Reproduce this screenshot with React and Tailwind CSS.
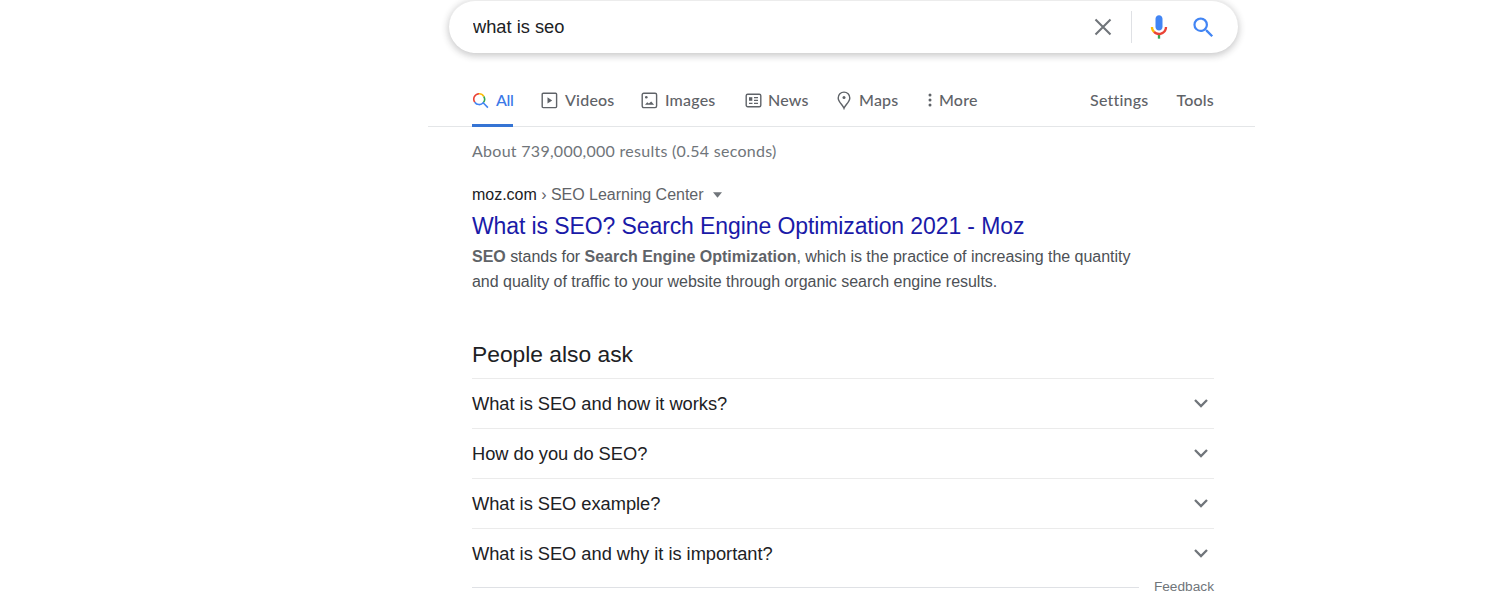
import React, { useState } from "react";

const questions = [
  "What is SEO and how it works?",
  "How do you do SEO?",
  "What is SEO example?",
  "What is SEO and why it is important?",
];

function MicIcon() {
  return (
    <svg width="28" height="28" viewBox="0 0 24 24">
      <path fill="#4285f4" d="M12 15c1.66 0 3-1.31 3-2.97v-7.02c0-1.66-1.34-3.01-3-3.01s-3 1.34-3 3.01v7.02c0 1.66 1.34 2.97 3 2.97z" />
      <path fill="#34a853" d="M11 18.08h2v3.92h-2z" />
      <path fill="#fbbc05" d="M7.05 16.87c-1.27-1.33-2.05-2.83-2.05-4.87h2c0 1.45.56 2.42 1.47 3.38v.32l-1.15 1.18z" />
      <path fill="#ea4335" d="M12 16.93a4.97 5.25 0 0 1-3.54-1.55l-1.41 1.49c1.26 1.34 3.02 2.13 4.95 2.13 3.87 0 6.99-2.92 6.99-7h-1.99c0 2.92-2.24 4.93-5 4.93z" />
    </svg>
  );
}

function SearchIcon() {
  return (
    <svg width="27" height="27" viewBox="0 0 24 24" fill="#4285f4">
      <path d="M15.5 14h-.79l-.28-.27A6.471 6.471 0 0 0 16 9.5 6.5 6.5 0 1 0 9.5 16c1.61 0 3.09-.59 4.23-1.57l.27.28v.79l5 4.99L20.49 19l-4.99-5zm-6 0C7.01 14 5 11.99 5 9.5S7.01 5 9.5 5 14 7.01 14 9.5 11.99 14 9.5 14z" />
    </svg>
  );
}

function AllIcon() {
  return (
    <svg className="shrink-0" width="17" height="17" viewBox="0 0 17 17" fill="none" strokeWidth="1.6">
      <path stroke="#ea4335" d="M2.8 10.2A5.3 5.3 0 0 1 7 1.8" />
      <path stroke="#fbbc05" d="M7 1.8A5.3 5.3 0 0 1 11.8 4.5" />
      <path stroke="#34a853" d="M11.8 4.5A5.3 5.3 0 0 1 11.2 10.8" />
      <path stroke="#4285f4" d="M2.8 10.2A5.3 5.3 0 0 0 11.2 10.8L15.9 15.6" />
    </svg>
  );
}

function VideosIcon() {
  return (
    <svg width="17" height="17" viewBox="0 0 17 17" fill="none" stroke="#5f6368" strokeWidth="1.4">
      <rect x="1.2" y="1.2" width="14.4" height="14.4" rx="1" />
      <path d="M6.5 5.2v6.4l4.7-3.2z" fill="#5f6368" stroke="none" />
    </svg>
  );
}

function ImagesIcon() {
  return (
    <svg width="17" height="17" viewBox="0 0 17 17" fill="none" stroke="#5f6368" strokeWidth="1.4">
      <rect x="1.2" y="1.2" width="14.4" height="14.4" rx="1.5" />
      <circle cx="5.3" cy="5.2" r="1.3" fill="#5f6368" stroke="none" />
      <path d="M4 12.8l2.2-2.5 1.7 1.2 2.3-2.1 2.9 3.4z" fill="#5f6368" stroke="none" />
    </svg>
  );
}

function NewsIcon() {
  return (
    <svg width="17" height="17" viewBox="0 0 17 17" fill="none" stroke="#5f6368" strokeWidth="1.4">
      <rect x="1.2" y="2.2" width="14.6" height="12.6" rx="1.5" />
      <path d="M4 5.2h3.3v3.6H4z" fill="#5f6368" stroke="none" />
      <path d="M9 5.7h4M9 8.4h4M4 11.3h3.5M9 11.3h4" strokeWidth="1.2" />
    </svg>
  );
}

function MapsIcon() {
  return (
    <svg width="14" height="19" viewBox="0 0 14 19" fill="none" stroke="#5f6368" strokeWidth="1.4">
      <path d="M7 17.3C5.8 14 1.2 10.8 1.2 6.9a5.8 5.8 0 0 1 11.6 0C12.8 10.8 8.2 14 7 17.3z" />
      <circle cx="7" cy="6.6" r="1.5" fill="#5f6368" stroke="none" />
    </svg>
  );
}

function MoreIcon() {
  return (
    <svg width="4" height="14" viewBox="0 0 4 14" fill="#5f6368">
      <circle cx="2" cy="2" r="1.5" />
      <circle cx="2" cy="7" r="1.5" />
      <circle cx="2" cy="12" r="1.5" />
    </svg>
  );
}

export default function App() {
  const [query, setQuery] = useState("what is seo");

  return (
    <div className="h-[600px] overflow-hidden bg-white font-['Liberation_Sans',Arial,sans-serif] text-[#202124]">
      {/* Search bar */}
      <div className="ml-[449px] flex h-[53px] w-[789px] items-center rounded-full border-t border-[#ececec] bg-white pl-6 pr-[21px] shadow-[0_2px_7px_1px_rgba(32,33,36,0.24)]">
        <input
          value={query}
          onChange={(e) => setQuery(e.target.value)}
          className="-mt-px min-w-0 flex-1 bg-transparent text-[18.3px] outline-none"
        />
        <button onClick={() => setQuery("")}>
          <svg width="18" height="18" viewBox="0 0 18 18" stroke="#70757a" strokeWidth="2.1">
            <path d="M1.5 1.5l15 15M16.5 1.5l-15 15" />
          </svg>
        </button>
        <div className="ml-[19px] h-8 w-px bg-[#dfe1e5]" />
        <button className="ml-[13px]"><MicIcon /></button>
        <button className="ml-[17px]"><SearchIcon /></button>
      </div>

      {/* Tabs */}
      <nav className="ml-[428px] flex h-[74px] w-[827px] items-stretch border-b border-[#e4e6e8] pl-11 pr-[41px] pt-[21px] font-['Lato',sans-serif] text-[16px] font-medium tracking-[0.2px] text-[#5f6368] [font-variant-ligatures:none]">
        <div className="-mb-px flex w-[41px] items-center gap-[7px] border-b-[3px] border-[#3574d4] pt-[2px] text-[#3b78e7]">
          <AllIcon />
          <span className="tracking-[-0.4px]">All</span>
        </div>
        <div className="ml-7 flex w-[100px] items-center gap-[7px]"><VideosIcon /><span>Videos</span></div>
        <div className="flex w-[104px] items-center gap-[7px]"><ImagesIcon /><span>Images</span></div>
        <div className="flex w-[92px] items-center gap-[6px]"><NewsIcon /><span>News</span></div>
        <div className="flex w-[91px] items-center gap-2"><MapsIcon /><span>Maps</span></div>
        <div className="flex items-center gap-[7px]"><MoreIcon /><span>More</span></div>
        <div className="ml-auto flex items-center gap-7">
          <span>Settings</span>
          <span>Tools</span>
        </div>
      </nav>

      <main className="ml-[472px] w-[742px]">
        <p className="pt-3 font-['Lato',sans-serif] text-[16px] leading-6 text-[#70757a]">
          <span className="tracking-[0.28px]">About 739,000,000 results (0.54 seconds)</span>
        </p>

        {/* Result */}
        <div className="mt-[22px] flex h-5 items-center whitespace-pre text-[16px] leading-5 tracking-[-0.02px] text-[#5f6368]">
          <span className="text-[#202124]">moz.com</span>
          <span> › SEO Learning Center</span>
          <svg className="ml-[9px]" width="9" height="6" viewBox="0 0 10 6" fill="#70757a">
            <path d="M0 0h10L5 6z" />
          </svg>
        </div>
        <h3 className="mt-[6px] whitespace-nowrap text-[23px] leading-[30px] tracking-[-0.1px] text-[#1a1aa8]">
          What is SEO? Search Engine Optimization 2021 - Moz
        </h3>
        <p className="mt-[3px] whitespace-nowrap text-[16px] leading-[25px] tracking-[-0.025px] text-[#4d5156]">
          <b className="text-[#5f6368]">SEO</b> stands for <b className="text-[#5f6368]">Search Engine Optimization</b>, which is the practice of increasing the quantity
          <br />
          and quality of traffic to your website through organic search engine results.
        </p>

        {/* People also ask */}
        <h2 className="mt-[45px] text-[22.8px] leading-[30px]">People also ask</h2>
        <ul className="mt-[9px]">
          {questions.map((q) => (
            <li key={q} className="flex h-[50px] items-center justify-between border-t border-[#ebebeb] pr-[6px] text-[18.3px] tracking-[-0.03px]">
              <span>{q}</span>
              <svg width="14" height="9" viewBox="0 0 14 9" fill="none" stroke="#70757a" strokeWidth="2.3">
                <path d="M1 1l6 6 6-6" />
              </svg>
            </li>
          ))}
        </ul>
        <div className="flex h-[18px] items-center justify-between text-[13.7px] text-[#70757a]">
          <div className="h-px w-[667px] bg-[#dfe1e5]" />
          <span>Feedback</span>
        </div>
      </main>
    </div>
  );
}
